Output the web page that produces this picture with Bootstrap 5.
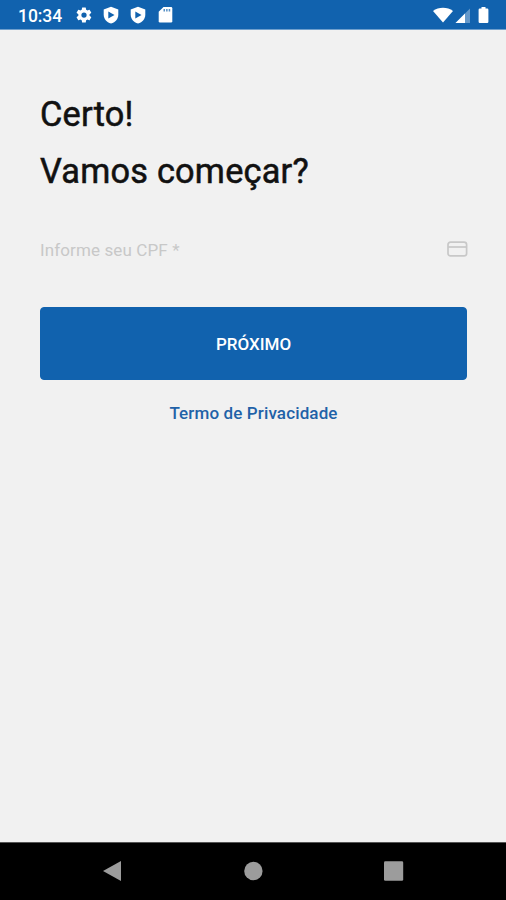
<!DOCTYPE html>
<html lang="pt-BR">
<head>
<meta charset="utf-8">
<meta name="viewport" content="width=device-width, initial-scale=1">
<title>Certo! Vamos começar?</title>
<link href="https://cdn.jsdelivr.net/npm/bootstrap@5.3.0/dist/css/bootstrap.min.css" rel="stylesheet">
<style>
  body { font-family: Roboto, "Liberation Sans", sans-serif; background: #f1f1f1; height: 900px; }
  svg { display: block; flex: none; }
  .status-bar { height: 30px; padding: 2px 16px 0 18px; background: #1162ae; border-bottom: 1px solid #6f9fcd; font-size: 17.5px; line-height: 29px; letter-spacing: -.05px; }
  .status-clock { padding-top: 1px; }
  .status-icons { margin-left: 13px; gap: 9px; padding-bottom: 1px; }
  .signal-icons { padding-bottom: 2px; }
  .main-area { padding: 56px 39px 0 40px; }
  .headline { font-size: 34.300px; line-height: 57px; color: #111; letter-spacing: .22px; font-weight: 400; -webkit-text-stroke: .55px #111; }
  .cpf-row { margin-top: 35px; height: 28px; }
  .cpf-input, .cpf-input:focus { background: transparent; font-size: 17px; color: #555; box-shadow: none; letter-spacing: .12px; line-height: 28px; }
  .cpf-input { padding-top: 2px; }
  .cpf-input::placeholder { color: #c8c8c8; opacity: 1; }
  .next-btn { --bs-btn-bg: #1162ae; --bs-btn-hover-bg: #0e579c; --bs-btn-border-color: #1162ae; height: 73px; margin-top: 44px; padding-top: 8px; border-radius: 4px; font-size: 17px; }
  .terms-link { margin-top: 20px; font-size: 17px; line-height: 26px; color: #1f62a8; letter-spacing: .13px; }
  .system-nav { height: 58px; padding: 0 102px 2px; border-top: 1px solid #555; }
</style>
<script src="https://cdn.jsdelivr.net/npm/bootstrap@5.3.0/dist/js/bootstrap.bundle.min.js"></script>
</head>
<body class="d-flex flex-column overflow-hidden">
<header class="status-bar d-flex align-items-center text-white fw-medium">
  <span class="status-clock fw-medium">10:34</span>
  <div class="status-icons d-flex align-items-center">
    <svg width="18" height="18" viewBox="0 0 24 24" fill="#fff"><path d="M19.4 13a7.500 7.500 0 0 0 0-2l2.100-1.600a.5.5 0 0 0 .1-.6l-2-3.500a.5.5 0 0 0-.6-.2l-2.500 1a7.300 7.300 0 0 0-1.700-1l-.4-2.600a.5.5 0 0 0-.5-.4h-4a.5.5 0 0 0-.5.400L9 5.100a7.700 7.700 0 0 0-1.700 1l-2.500-1a.5.5 0 0 0-.6.2l-2 3.500a.5.5 0 0 0 .1.6L4.500 11a7.900 7.900 0 0 0 0 2l-2.200 1.600a.5.5 0 0 0-.1.6l2 3.500a.5.5 0 0 0 .6.2l2.500-1a7.300 7.300 0 0 0 1.700 1l.4 2.600a.5.5 0 0 0 .5.4h4a.5.5 0 0 0 .5-.4l.4-2.600a7.700 7.700 0 0 0 1.700-1l2.500 1a.5.5 0 0 0 .6-.2l2-3.500a.5.5 0 0 0-.1-.6zM12 15.500a3.500 3.500 0 1 1 0-7 3.500 3.500 0 0 1 0 7z"/></svg>
    <svg width="18" height="18" viewBox="0 0 18 18"><path fill="#fff" d="M9 .7 16.300 3.500V8.500C16.300 13 13.500 16.200 9 17.500 4.500 16.200 1.700 13 1.700 8.500V3.500z"/><path fill="#1162ae" d="M6.300 5.400 12.500 9 6.300 12.600z"/></svg>
    <svg width="18" height="18" viewBox="0 0 18 18"><path fill="#fff" d="M9 .7 16.300 3.500V8.500C16.300 13 13.500 16.200 9 17.500 4.500 16.200 1.700 13 1.700 8.500V3.500z"/><path fill="#1162ae" d="M6.300 5.400 12.500 9 6.300 12.600z"/></svg>
    <svg width="18" height="18" viewBox="0 0 18 18"><path fill="#fff" d="M7.500 1h7.500a1.300 1.300 0 0 1 1.300 1.300v12.900a1.300 1.300 0 0 1-1.300 1.300h-11a1.300 1.300 0 0 1-1.300-1.300V5.800z"/><path fill="#1162ae" d="M7.500 2.900h1.500v2.700H7.500zm2.600 0h1.500v2.700H10.100zm2.600 0h1.500v2.700h-1.500z" opacity=".7"/></svg>
  </div>
  <div class="signal-icons d-flex align-items-center ms-auto">
    <svg width="57" height="18" viewBox="0 0 57 18"><path fill="#fff" d="M0 5C5.500.7 14.500.7 20 5L10 16.600z"/><path fill="#fff" opacity=".35" d="M37 2.500V17H22.500z"/><path fill="#fff" d="M32 7.500V17h-9.500z"/><path fill="#fff" d="M48.500 1h4v1.600h1.700q1.200 0 1.200 1.200v12q0 1.200-1.200 1.200h-7.400q-1.200 0-1.200-1.200v-12q0-1.200 1.200-1.200h1.700z"/></svg>
  </div>
</header>
<main class="main-area flex-grow-1 d-flex flex-column">
  <h1 class="headline mb-0">Certo!<br>Vamos começar?</h1>
  <div class="cpf-row d-flex align-items-center">
    <input class="cpf-input form-control border-0 px-0 pb-0" type="text" inputmode="numeric" placeholder="Informe seu CPF *" aria-label="Informe seu CPF">
    <svg class="overflow-visible" width="21" height="16" viewBox="0 0 21 16" fill="none" stroke="#c8c8c8" stroke-width="1.700"><rect x="2" y="1.100" width="18.600" height="13.800" rx="2.500"/><path d="M2 6h18.600"/></svg>
  </div>
  <button type="button" class="next-btn btn btn-primary w-100 fw-medium">PRÓXIMO</button>
  <a href="#" class="terms-link text-decoration-none align-self-center fw-medium">Termo de Privacidade</a>
</main>
<nav class="system-nav bg-black d-flex align-items-center justify-content-between">
  <svg width="20" height="22" viewBox="0 0 20 22"><path fill="#9c9c9c" d="M19 1v20L1 11z"/></svg>
  <svg width="20" height="20" viewBox="0 0 20 20"><circle cx="10.400" cy="10" r="9.200" fill="#9c9c9c"/></svg>
  <svg width="20" height="20" viewBox="0 0 20 20"><rect x="0" y=".3" width="19.200" height="19.400" rx="1.300" fill="#9c9c9c"/></svg>
</nav>
</body>
</html>
